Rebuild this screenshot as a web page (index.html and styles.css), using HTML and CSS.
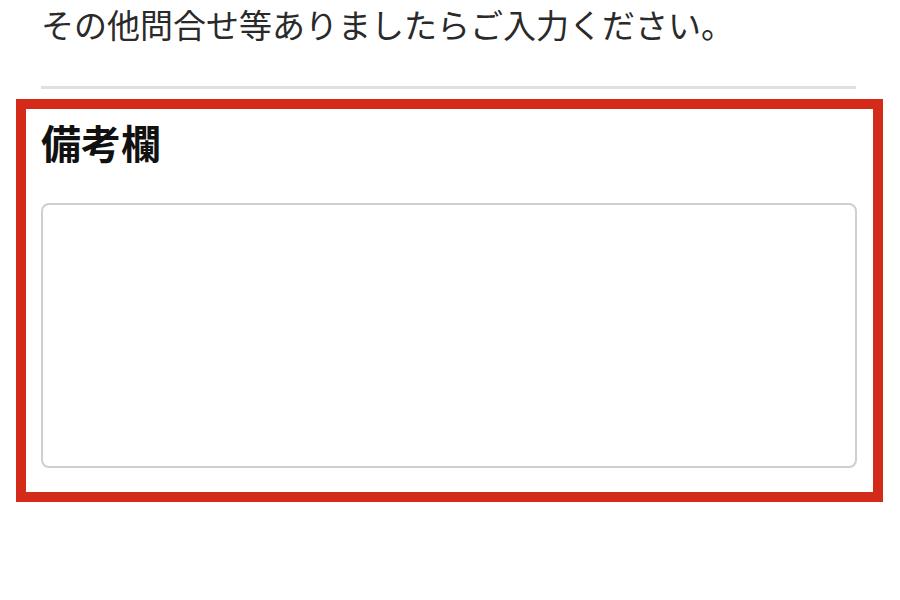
FILE: index.html
```html
<!DOCTYPE html>
<html lang="ja">
<head>
<meta charset="UTF-8">
<meta name="viewport" content="width=device-width, initial-scale=1.0">
<title>備考欄</title>
<link rel="stylesheet" href="styles.css">
</head>
<body>

<div class="page">
  <p class="lead">その他問合せ等ありましたらご入力ください。</p>
  <div class="divider"></div>

  <div class="highlight">
    <label class="field-title" for="remarks">備考欄</label>
    <textarea id="remarks" class="remarks"></textarea>
  </div>
</div>

</body>
</html>
```

FILE: styles.css
```css
body { margin: 0; background-color: #fff; font-family: "Noto Sans CJK JP", "Noto Sans", sans-serif; color: #222; }
.page { width: 900px; height: 600px; overflow: hidden; }
.lead { margin: 0; padding: 0 0 0 41px; font-size: 33px; line-height: 48px; color: #2a2a2a; }
.divider { margin: 38px 44px 0 41px; border-top: 3px solid #e0e0e0; }
.highlight {
  box-sizing: border-box;
  width: 867px;
  margin: 10px 0 0 16px;
  padding: 8px 16px 24px 15px;
  border: 10px solid #d42a1a;
  display: flex;
  flex-direction: column;
}
.field-title { font-size: 40px; font-weight: bold; line-height: 50px; color: #111; margin-bottom: 36px; }
.remarks {
  box-sizing: border-box;
  width: 816px;
  height: 265px;
  border: 2px solid #cfcfcf;
  border-radius: 8px;
  resize: none;
  font-family: inherit;
}
```
